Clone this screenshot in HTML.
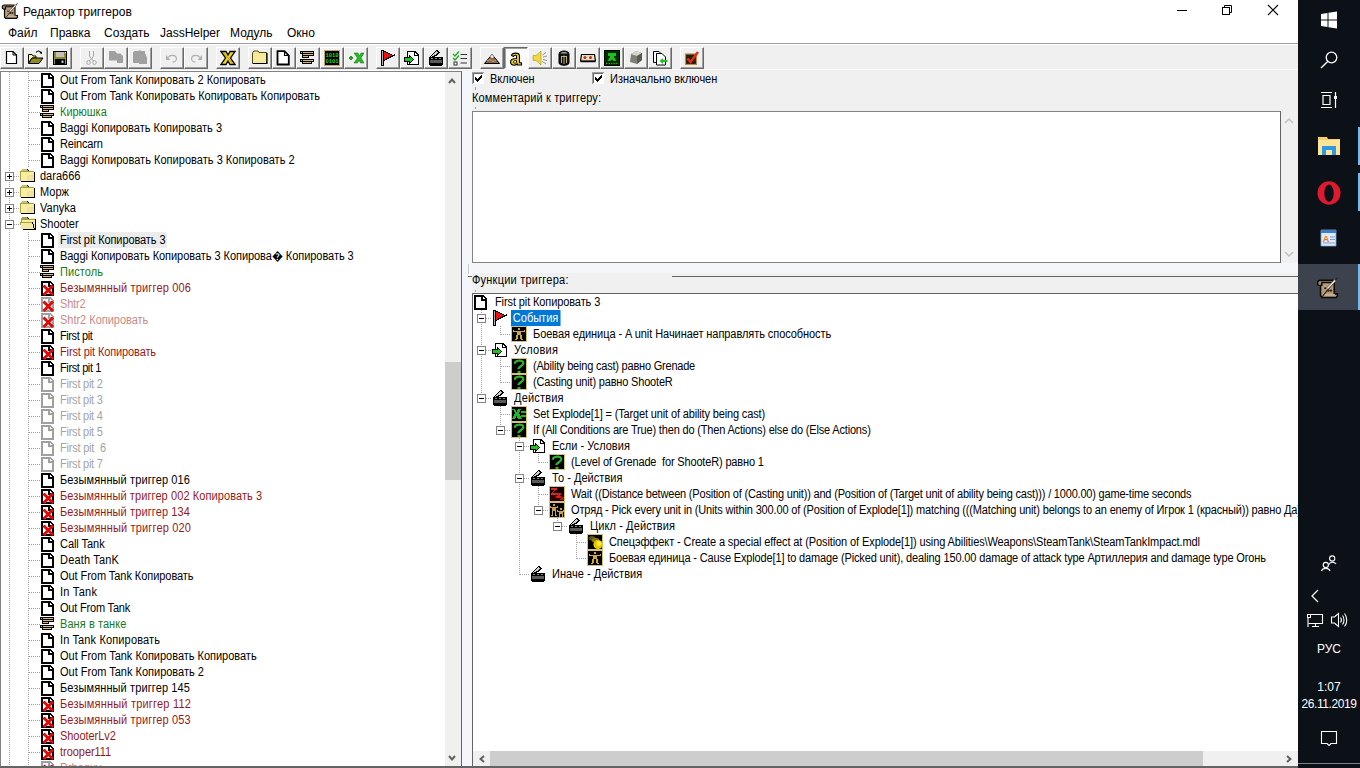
<!DOCTYPE html><html><head><meta charset="utf-8"><style>

*{margin:0;padding:0;box-sizing:border-box}
html,body{width:1360px;height:768px;overflow:hidden;background:#f0f0f0;font-family:"Liberation Sans",sans-serif;font-size:11px;color:#000}
.a{position:absolute}
.t{position:absolute;white-space:pre;line-height:16px;font-size:12px;height:16px;transform:scaleX(0.917);transform-origin:0 0}
.ic{position:absolute;width:16px;height:16px}
.ex{position:absolute;width:9px;height:9px}
.btn{position:absolute;top:47px;width:24px;height:22px;border-left:1px solid #fff;border-top:1px solid #fff;border-right:1px solid #696969;border-bottom:1px solid #696969;background:#f0f0f0;box-shadow:inset -1px -1px #a0a0a0}
.btn svg{position:absolute;left:3px;top:2px;width:16px;height:16px}
.dv{position:absolute;width:1px;background:repeating-linear-gradient(to bottom,#a0a0a0 0 1px,transparent 1px 2px)}
.dh{position:absolute;height:1px;background:repeating-linear-gradient(to right,#a0a0a0 0 1px,transparent 1px 2px)}
.tb{position:absolute;color:#fff}

</style></head><body>
<div class="a" style="left:0;top:0;width:1298px;height:43px;background:#fff"></div>
<svg class="a" style="left:0;top:0" width="22" height="22" viewBox="0 0 22 22"><path d="M4.5 5.5H15V15.5H17.5V17.2L16.5 18.3H5.5L4.5 17Z" fill="#b39a7a" stroke="#0a0806" stroke-width="1.2"/><path d="M2.2 7C2.2 5.3 3.2 5 4.5 5H14V6.8H5.5V9H3.2C2.5 9 2.2 8 2.2 7Z" fill="#9c8466" stroke="#0a0806" stroke-width="1.1"/><path d="M6 15.5H15.5V17H6Z" fill="#c8b090"/><circle cx="8" cy="11.2" r="0.8" fill="#2a2018"/><circle cx="10.5" cy="13" r="0.9" fill="#2a2018"/><circle cx="12.5" cy="13" r="0.9" fill="#2a2018"/><path d="M5.5 18L17.5 3.2" stroke="#2a2418" stroke-width="0.9"/><path d="M9 11.2L15.2 4.5L16.3 5.6L10.2 12Z" fill="#ece8dc" stroke="#4a4438" stroke-width="0.5"/></svg>
<div class="a" style="left:23px;top:1px;height:22px;line-height:22px;font-size:12px;white-space:pre">Редактор триггеров</div>
<div class="a" style="left:1177px;top:10px;width:10px;height:1px;background:#000"></div>
<svg class="a" style="left:1221px;top:4px" width="12" height="12" viewBox="0 0 12 12"><rect x="1.5" y="3.5" width="7" height="7" fill="none" stroke="#000"/><path d="M3.5 3.5V1.5H10.5V8.5H8.5" fill="none" stroke="#000"/></svg>
<svg class="a" style="left:1267px;top:4px" width="12" height="12" viewBox="0 0 12 12"><path d="M1 1L11 11M11 1L1 11" stroke="#000" stroke-width="1.1"/></svg>
<div class="a" style="left:8px;top:23px;height:20px;line-height:20px;font-size:12px;white-space:pre">Файл</div>
<div class="a" style="left:50px;top:23px;height:20px;line-height:20px;font-size:12px;white-space:pre">Правка</div>
<div class="a" style="left:104px;top:23px;height:20px;line-height:20px;font-size:12px;white-space:pre">Создать</div>
<div class="a" style="left:160px;top:23px;height:20px;line-height:20px;font-size:12px;white-space:pre">JassHelper</div>
<div class="a" style="left:230px;top:23px;height:20px;line-height:20px;font-size:12px;white-space:pre">Модуль</div>
<div class="a" style="left:287px;top:23px;height:20px;line-height:20px;font-size:12px;white-space:pre">Окно</div>
<div class="a" style="left:0;top:43px;width:1298px;height:1px;background:#a0a0a0"></div>
<div class="a" style="left:0;top:44px;width:1298px;height:1px;background:#fff"></div>
<div class="btn" style="left:0px;"><svg><use href="#tnew"/></svg></div>
<div class="btn" style="left:24px;"><svg><use href="#topen"/></svg></div>
<div class="btn" style="left:48px;"><svg><use href="#tsave"/></svg></div>
<div class="btn" style="left:80px;"><svg><use href="#tcut"/></svg></div>
<div class="btn" style="left:104px;"><svg><use href="#tcopy"/></svg></div>
<div class="btn" style="left:128px;"><svg><use href="#tpaste"/></svg></div>
<div class="btn" style="left:160px;"><svg><use href="#tundo"/></svg></div>
<div class="btn" style="left:184px;"><svg><use href="#tredo"/></svg></div>
<div class="btn" style="left:216px;"><svg><use href="#tx"/></svg></div>
<div class="btn" style="left:248px;"><svg><use href="#tfold"/></svg></div>
<div class="btn" style="left:272px;"><svg><use href="#tdoc"/></svg></div>
<div class="btn" style="left:296px;"><svg><use href="#var"/></svg></div>
<div class="btn" style="left:320px;"><svg><use href="#t0101"/></svg></div>
<div class="btn" style="left:344px;"><svg><use href="#tgx"/></svg></div>
<div class="btn" style="left:376px;"><svg><use href="#flag"/></svg></div>
<div class="btn" style="left:400px;"><svg><use href="#cond"/></svg></div>
<div class="btn" style="left:424px;"><svg><use href="#clap"/></svg></div>
<div class="btn" style="left:448px;"><svg><use href="#tchk"/></svg></div>
<div class="btn" style="left:480px;"><svg><use href="#tterr"/></svg></div>
<div class="btn" style="left:504px;background:#fbfbfb;border-left-color:#696969;border-top-color:#696969;border-right-color:#fff;border-bottom-color:#fff;box-shadow:inset 1px 1px #a0a0a0;"><svg><use href="#ta"/></svg></div>
<div class="btn" style="left:528px;"><svg><use href="#tsnd"/></svg></div>
<div class="btn" style="left:552px;"><svg><use href="#tunit"/></svg></div>
<div class="btn" style="left:576px;"><svg><use href="#tdood"/></svg></div>
<div class="btn" style="left:600px;"><svg><use href="#tface"/></svg></div>
<div class="btn" style="left:624px;"><svg><use href="#tcube"/></svg></div>
<div class="btn" style="left:648px;"><svg><use href="#tcpy"/></svg></div>
<div class="btn" style="left:680px;"><svg><use href="#trchk"/></svg></div>
<div class="a" style="left:0;top:70px;width:462px;height:1px;background:#fff"></div>
<div class="a" style="left:462px;top:69px;width:836px;height:1px;background:#f8f8f8"></div>
<div class="a" style="left:0;top:71px;width:462px;height:697px;background:#fff;border-top:1px solid #828282;border-left:1px solid #828282;border-right:1px solid #646464"></div>
<div class="dv" style="left:9px;top:72px;height:695px"></div>
<div class="dv" style="left:28px;top:72px;height:96px"></div>
<div class="dv" style="left:28px;top:232px;height:535px"></div>
<div class="dh" style="left:29px;top:80px;width:11px"></div>
<svg class="ic" style="left:40px;top:72px;width:16px;height:16px"><use href="#doc"/></svg>
<div class="t" style="left:60.2px;top:72px;color:#000;letter-spacing:-0.0167px;">Out From Tank Копировать 2 Копировать</div>
<div class="dh" style="left:29px;top:96px;width:11px"></div>
<svg class="ic" style="left:40px;top:88px;width:16px;height:16px"><use href="#doc"/></svg>
<div class="t" style="left:60.2px;top:88px;color:#000;letter-spacing:0.0111px;">Out From Tank Копировать Копировать Копировать</div>
<div class="dh" style="left:29px;top:112px;width:11px"></div>
<svg class="ic" style="left:40px;top:104px;width:16px;height:16px"><use href="#var"/></svg>
<div class="t" style="left:60.2px;top:104px;color:#187a18;letter-spacing:-0.0333px;">Кирюшка</div>
<div class="dh" style="left:29px;top:128px;width:11px"></div>
<svg class="ic" style="left:40px;top:120px;width:16px;height:16px"><use href="#doc"/></svg>
<div class="t" style="left:60.2px;top:120px;color:#000;letter-spacing:0.0036px;">Baggi Копировать Копировать 3</div>
<div class="dh" style="left:29px;top:144px;width:11px"></div>
<svg class="ic" style="left:40px;top:136px;width:16px;height:16px"><use href="#doc"/></svg>
<div class="t" style="left:60.2px;top:136px;color:#000;letter-spacing:-0.2000px;">Reincarn</div>
<div class="dh" style="left:29px;top:160px;width:11px"></div>
<svg class="ic" style="left:40px;top:152px;width:16px;height:16px"><use href="#doc"/></svg>
<div class="t" style="left:60.2px;top:152px;color:#000;letter-spacing:0.0317px;">Baggi Копировать Копировать 3 Копировать 2</div>
<div class="dh" style="left:14px;top:176px;width:7px"></div>
<svg class="ex" style="left:5px;top:172px;width:9px;height:9px"><use href="#plus"/></svg>
<svg class="ic" style="left:20px;top:168px;width:16px;height:16px"><use href="#fold"/></svg>
<div class="t" style="left:40px;top:168px;color:#000">dara666</div>
<div class="dh" style="left:14px;top:192px;width:7px"></div>
<svg class="ex" style="left:5px;top:188px;width:9px;height:9px"><use href="#plus"/></svg>
<svg class="ic" style="left:20px;top:184px;width:16px;height:16px"><use href="#fold"/></svg>
<div class="t" style="left:40px;top:184px;color:#000">Морж</div>
<div class="dh" style="left:14px;top:208px;width:7px"></div>
<svg class="ex" style="left:5px;top:204px;width:9px;height:9px"><use href="#plus"/></svg>
<svg class="ic" style="left:20px;top:200px;width:16px;height:16px"><use href="#fold"/></svg>
<div class="t" style="left:40px;top:200px;color:#000">Vanyka</div>
<div class="dh" style="left:14px;top:224px;width:7px"></div>
<svg class="ex" style="left:5px;top:220px;width:9px;height:9px"><use href="#minus"/></svg>
<svg class="ic" style="left:20px;top:216px;width:16px;height:16px"><use href="#foldo"/></svg>
<div class="t" style="left:40px;top:216px;color:#000">Shooter</div>
<div class="dh" style="left:29px;top:240px;width:11px"></div>
<svg class="ic" style="left:40px;top:232px;width:16px;height:16px"><use href="#doc"/></svg>
<div class="a" style="left:58px;top:232px;width:109px;height:16px;background:#ececec"></div>
<div class="t" style="left:60.2px;top:232px;color:#000;letter-spacing:-0.1048px;">First pit Копировать 3</div>
<div class="dh" style="left:29px;top:256px;width:11px"></div>
<svg class="ic" style="left:40px;top:248px;width:16px;height:16px"><use href="#doc"/></svg>
<div class="t" style="left:60.2px;top:248px;color:#000;letter-spacing:-0.0529px;">Baggi Копировать Копировать 3 Копирова� Копировать 3</div>
<div class="dh" style="left:29px;top:272px;width:11px"></div>
<svg class="ic" style="left:40px;top:264px;width:16px;height:16px"><use href="#var"/></svg>
<div class="t" style="left:60.2px;top:264px;color:#187a18;letter-spacing:0.0667px;">Пистоль</div>
<div class="dh" style="left:29px;top:288px;width:11px"></div>
<svg class="ic" style="left:40px;top:280px;width:16px;height:16px"><use href="#docx"/></svg>
<div class="t" style="left:60.2px;top:280px;color:#941a1a;letter-spacing:0.1667px;">Безымянный триггер 006</div>
<div class="dh" style="left:29px;top:304px;width:11px"></div>
<svg class="ic" style="left:40px;top:296px;width:16px;height:16px"><use href="#docxf"/></svg>
<div class="t" style="left:60.2px;top:296px;color:#c88a8a;letter-spacing:-0.2000px;">Shtr2</div>
<div class="dh" style="left:29px;top:320px;width:11px"></div>
<svg class="ic" style="left:40px;top:312px;width:16px;height:16px"><use href="#docxf"/></svg>
<div class="t" style="left:60.2px;top:312px;color:#c88a8a;letter-spacing:-0.0200px;">Shtr2 Копировать</div>
<div class="dh" style="left:29px;top:336px;width:11px"></div>
<svg class="ic" style="left:40px;top:328px;width:16px;height:16px"><use href="#doc"/></svg>
<div class="t" style="left:60.2px;top:328px;color:#000;letter-spacing:-0.4500px;">First pit</div>
<div class="dh" style="left:29px;top:352px;width:11px"></div>
<svg class="ic" style="left:40px;top:344px;width:16px;height:16px"><use href="#docx"/></svg>
<div class="t" style="left:60.2px;top:344px;color:#941a1a;letter-spacing:-0.1316px;">First pit Копировать</div>
<div class="dh" style="left:29px;top:368px;width:11px"></div>
<svg class="ic" style="left:40px;top:360px;width:16px;height:16px"><use href="#doc"/></svg>
<div class="t" style="left:60.2px;top:360px;color:#000;letter-spacing:-0.4200px;">First pit 1</div>
<div class="dh" style="left:29px;top:384px;width:11px"></div>
<svg class="ic" style="left:40px;top:376px;width:16px;height:16px"><use href="#docg"/></svg>
<div class="t" style="left:60.2px;top:376px;color:#a4a4a4;letter-spacing:-0.2600px;">First pit 2</div>
<div class="dh" style="left:29px;top:400px;width:11px"></div>
<svg class="ic" style="left:40px;top:392px;width:16px;height:16px"><use href="#docg"/></svg>
<div class="t" style="left:60.2px;top:392px;color:#a4a4a4;letter-spacing:-0.2600px;">First pit 3</div>
<div class="dh" style="left:29px;top:416px;width:11px"></div>
<svg class="ic" style="left:40px;top:408px;width:16px;height:16px"><use href="#docg"/></svg>
<div class="t" style="left:60.2px;top:408px;color:#a4a4a4;letter-spacing:-0.2600px;">First pit 4</div>
<div class="dh" style="left:29px;top:432px;width:11px"></div>
<svg class="ic" style="left:40px;top:424px;width:16px;height:16px"><use href="#docg"/></svg>
<div class="t" style="left:60.2px;top:424px;color:#a4a4a4;letter-spacing:-0.2600px;">First pit 5</div>
<div class="dh" style="left:29px;top:448px;width:11px"></div>
<svg class="ic" style="left:40px;top:440px;width:16px;height:16px"><use href="#docg"/></svg>
<div class="t" style="left:60.2px;top:440px;color:#a4a4a4;letter-spacing:-0.2273px;">First pit  6</div>
<div class="dh" style="left:29px;top:464px;width:11px"></div>
<svg class="ic" style="left:40px;top:456px;width:16px;height:16px"><use href="#docg"/></svg>
<div class="t" style="left:60.2px;top:456px;color:#a4a4a4;letter-spacing:-0.2600px;">First pit 7</div>
<div class="dh" style="left:29px;top:480px;width:11px"></div>
<svg class="ic" style="left:40px;top:472px;width:16px;height:16px"><use href="#doc"/></svg>
<div class="t" style="left:60.2px;top:472px;color:#000;letter-spacing:0.1190px;">Безымянный триггер 016</div>
<div class="dh" style="left:29px;top:496px;width:11px"></div>
<svg class="ic" style="left:40px;top:488px;width:16px;height:16px"><use href="#docx"/></svg>
<div class="t" style="left:60.2px;top:488px;color:#941a1a;letter-spacing:0.1000px;">Безымянный триггер 002 Копировать 3</div>
<div class="dh" style="left:29px;top:512px;width:11px"></div>
<svg class="ic" style="left:40px;top:504px;width:16px;height:16px"><use href="#docx"/></svg>
<div class="t" style="left:60.2px;top:504px;color:#941a1a;letter-spacing:0.1190px;">Безымянный триггер 134</div>
<div class="dh" style="left:29px;top:528px;width:11px"></div>
<svg class="ic" style="left:40px;top:520px;width:16px;height:16px"><use href="#docx"/></svg>
<div class="t" style="left:60.2px;top:520px;color:#941a1a;letter-spacing:0.1667px;">Безымянный триггер 020</div>
<div class="dh" style="left:29px;top:544px;width:11px"></div>
<svg class="ic" style="left:40px;top:536px;width:16px;height:16px"><use href="#doc"/></svg>
<div class="t" style="left:60.2px;top:536px;color:#000;letter-spacing:-0.0562px;">Call Tank</div>
<div class="dh" style="left:29px;top:560px;width:11px"></div>
<svg class="ic" style="left:40px;top:552px;width:16px;height:16px"><use href="#doc"/></svg>
<div class="t" style="left:60.2px;top:552px;color:#000;letter-spacing:0.2000px;">Death TanK</div>
<div class="dh" style="left:29px;top:576px;width:11px"></div>
<svg class="ic" style="left:40px;top:568px;width:16px;height:16px"><use href="#doc"/></svg>
<div class="t" style="left:60.2px;top:568px;color:#000;letter-spacing:-0.0609px;">Out From Tank Копировать</div>
<div class="dh" style="left:29px;top:592px;width:11px"></div>
<svg class="ic" style="left:40px;top:584px;width:16px;height:16px"><use href="#doc"/></svg>
<div class="t" style="left:60.2px;top:584px;color:#000;letter-spacing:0.3000px;">In Tank</div>
<div class="dh" style="left:29px;top:608px;width:11px"></div>
<svg class="ic" style="left:40px;top:600px;width:16px;height:16px"><use href="#doc"/></svg>
<div class="t" style="left:60.2px;top:600px;color:#000;letter-spacing:-0.2083px;">Out From Tank</div>
<div class="dh" style="left:29px;top:624px;width:11px"></div>
<svg class="ic" style="left:40px;top:616px;width:16px;height:16px"><use href="#var"/></svg>
<div class="t" style="left:60.2px;top:616px;color:#187a18;letter-spacing:0.0727px;">Ваня в танке</div>
<div class="dh" style="left:29px;top:640px;width:11px"></div>
<svg class="ic" style="left:40px;top:632px;width:16px;height:16px"><use href="#doc"/></svg>
<div class="t" style="left:60.2px;top:632px;color:#000;letter-spacing:0.1500px;">In Tank Копировать</div>
<div class="dh" style="left:29px;top:656px;width:11px"></div>
<svg class="ic" style="left:40px;top:648px;width:16px;height:16px"><use href="#doc"/></svg>
<div class="t" style="left:60.2px;top:648px;color:#000;letter-spacing:-0.0176px;">Out From Tank Копировать Копировать</div>
<div class="dh" style="left:29px;top:672px;width:11px"></div>
<svg class="ic" style="left:40px;top:664px;width:16px;height:16px"><use href="#doc"/></svg>
<div class="t" style="left:60.2px;top:664px;color:#000;letter-spacing:-0.0080px;">Out From Tank Копировать 2</div>
<div class="dh" style="left:29px;top:688px;width:11px"></div>
<svg class="ic" style="left:40px;top:680px;width:16px;height:16px"><use href="#doc"/></svg>
<div class="t" style="left:60.2px;top:680px;color:#000;letter-spacing:0.1190px;">Безымянный триггер 145</div>
<div class="dh" style="left:29px;top:704px;width:11px"></div>
<svg class="ic" style="left:40px;top:696px;width:16px;height:16px"><use href="#docx"/></svg>
<div class="t" style="left:60.2px;top:696px;color:#941a1a;letter-spacing:0.2095px;">Безымянный триггер 112</div>
<div class="dh" style="left:29px;top:720px;width:11px"></div>
<svg class="ic" style="left:40px;top:712px;width:16px;height:16px"><use href="#docx"/></svg>
<div class="t" style="left:60.2px;top:712px;color:#941a1a;letter-spacing:0.1619px;">Безымянный триггер 053</div>
<div class="dh" style="left:29px;top:736px;width:11px"></div>
<svg class="ic" style="left:40px;top:728px;width:16px;height:16px"><use href="#docx"/></svg>
<div class="t" style="left:60.2px;top:728px;color:#941a1a;letter-spacing:-0.0556px;">ShooterLv2</div>
<div class="dh" style="left:29px;top:752px;width:11px"></div>
<svg class="ic" style="left:40px;top:744px;width:16px;height:16px"><use href="#docx"/></svg>
<div class="t" style="left:60.2px;top:744px;color:#941a1a;letter-spacing:-0.0444px;">trooper111</div>
<div class="dh" style="left:29px;top:768px;width:11px"></div>
<svg class="ic" style="left:40px;top:760px;width:16px;height:16px"><use href="#docxf"/></svg>
<div class="t" style="left:60.2px;top:760px;color:#c88a8a;">Drbaguy</div>
<div class="a" style="left:445px;top:72px;width:16px;height:695px;background:#f0f0f0"></div>
<div class="a" style="left:445px;top:362px;width:16px;height:118px;background:#cdcdcd"></div>
<svg class="a" style="left:448px;top:77px" width="8" height="8" viewBox="0 0 8 8"><path d="M1 6L4 2.6L7 6" fill="none" stroke="#606060" stroke-width="2"/></svg>
<svg class="a" style="left:448px;top:754px" width="8" height="8" viewBox="0 0 8 8"><path d="M1 2L4 5.4L7 2" fill="none" stroke="#606060" stroke-width="2"/></svg>
<div class="a" style="left:462px;top:71px;width:10px;height:697px;background:#f3f6fb"></div>
<svg class="a" style="left:472px;top:72px" width="12" height="12" viewBox="0 0 12 12" shape-rendering="crispEdges"><rect width="12" height="12" fill="#fff"/><rect width="12" height="1" fill="#a0a0a0"/><rect width="1" height="12" fill="#a0a0a0"/><rect x="1" y="1" width="10" height="1" fill="#696969"/><rect x="1" y="1" width="1" height="10" fill="#696969"/><rect x="1" y="11" width="11" height="1" fill="#fff"/><rect x="11" y="1" width="1" height="11" fill="#fff"/><g fill="#000"><rect x="9" y="3" width="1" height="1"/><rect x="8" y="4" width="1" height="1"/><rect x="9" y="4" width="1" height="1"/><rect x="3" y="5" width="1" height="1"/><rect x="7" y="5" width="1" height="1"/><rect x="8" y="5" width="1" height="1"/><rect x="9" y="5" width="1" height="1"/><rect x="3" y="6" width="1" height="1"/><rect x="4" y="6" width="1" height="1"/><rect x="6" y="6" width="1" height="1"/><rect x="7" y="6" width="1" height="1"/><rect x="8" y="6" width="1" height="1"/><rect x="3" y="7" width="1" height="1"/><rect x="4" y="7" width="1" height="1"/><rect x="5" y="7" width="1" height="1"/><rect x="6" y="7" width="1" height="1"/><rect x="7" y="7" width="1" height="1"/><rect x="4" y="8" width="1" height="1"/><rect x="5" y="8" width="1" height="1"/><rect x="6" y="8" width="1" height="1"/><rect x="5" y="9" width="1" height="1"/></g></svg>
<div class="t" style="left:490px;top:71px">Включен</div>
<svg class="a" style="left:592px;top:72px" width="12" height="12" viewBox="0 0 12 12" shape-rendering="crispEdges"><rect width="12" height="12" fill="#fff"/><rect width="12" height="1" fill="#a0a0a0"/><rect width="1" height="12" fill="#a0a0a0"/><rect x="1" y="1" width="10" height="1" fill="#696969"/><rect x="1" y="1" width="1" height="10" fill="#696969"/><rect x="1" y="11" width="11" height="1" fill="#fff"/><rect x="11" y="1" width="1" height="11" fill="#fff"/><g fill="#000"><rect x="9" y="3" width="1" height="1"/><rect x="8" y="4" width="1" height="1"/><rect x="9" y="4" width="1" height="1"/><rect x="3" y="5" width="1" height="1"/><rect x="7" y="5" width="1" height="1"/><rect x="8" y="5" width="1" height="1"/><rect x="9" y="5" width="1" height="1"/><rect x="3" y="6" width="1" height="1"/><rect x="4" y="6" width="1" height="1"/><rect x="6" y="6" width="1" height="1"/><rect x="7" y="6" width="1" height="1"/><rect x="8" y="6" width="1" height="1"/><rect x="3" y="7" width="1" height="1"/><rect x="4" y="7" width="1" height="1"/><rect x="5" y="7" width="1" height="1"/><rect x="6" y="7" width="1" height="1"/><rect x="7" y="7" width="1" height="1"/><rect x="4" y="8" width="1" height="1"/><rect x="5" y="8" width="1" height="1"/><rect x="6" y="8" width="1" height="1"/><rect x="5" y="9" width="1" height="1"/></g></svg>
<div class="t" style="left:610px;top:71px">Изначально включен</div>
<div class="a" style="left:475px;top:87px;width:1px;height:3px;background:#a0a0a0"></div>
<div class="t" style="left:472px;top:90px;letter-spacing:0.15px">Комментарий к триггеру:</div>
<div class="a" style="left:475px;top:107px;width:1px;height:2px;background:#a0a0a0"></div>
<div class="a" style="left:472px;top:111px;width:809px;height:152px;background:#fff;border:1px solid #828282;border-right-color:#646464"></div>
<svg class="a" style="left:1284px;top:117px" width="10" height="7" viewBox="0 0 10 7"><path d="M1 6L5 2L9 6" fill="none" stroke="#c0c0c0" stroke-width="1.5"/></svg>
<svg class="a" style="left:1284px;top:251px" width="10" height="7" viewBox="0 0 10 7"><path d="M1 1L5 5L9 1" fill="none" stroke="#c0c0c0" stroke-width="1.5"/></svg>
<div class="a" style="left:472px;top:263px;width:826px;height:10px;background:#f4f6fa"></div>
<div class="a" style="left:468px;top:264px;width:1px;height:10px;background:#c8c8c8"></div>
<div class="a" style="left:672px;top:276px;width:626px;height:1px;background:#646464"></div>
<div class="a" style="left:468px;top:276px;width:4px;height:1px;background:#646464"></div>
<div class="t" style="left:472px;top:272px;letter-spacing:0.24px">Функции триггера:</div>
<div class="a" style="left:475px;top:290px;width:1px;height:2px;background:#a0a0a0"></div>
<div class="a" style="left:472px;top:293px;width:826px;height:475px;background:#fff;border-top:1px solid #646464;border-left:1px solid #646464;border-bottom:1px solid #646464"></div>
<div class="a" style="left:473px;top:294px;width:825px;height:457px;overflow:hidden">
<div class="dv" style="left:8px;top:16px;height:89px"></div>
<div class="dv" style="left:27px;top:32px;height:9px"></div>
<div class="dv" style="left:27px;top:64px;height:25px"></div>
<div class="dv" style="left:27px;top:112px;height:25px"></div>
<div class="dv" style="left:46px;top:144px;height:137px"></div>
<div class="dv" style="left:65px;top:160px;height:9px"></div>
<div class="dv" style="left:65px;top:192px;height:25px"></div>
<div class="dv" style="left:84px;top:224px;height:9px"></div>
<div class="dv" style="left:103px;top:240px;height:25px"></div>
<svg class="ic" style="left:0px;top:0px;width:16px;height:16px"><use href="#doc"/></svg>
<div class="t" style="left:21.5px;top:0px;letter-spacing:-0.1190px;">First pit Копировать 3</div>
<div class="dh" style="left:9px;top:24px;width:10px"></div>
<svg class="ex" style="left:4px;top:20px;width:9px;height:9px"><use href="#minus"/></svg>
<svg class="ic" style="left:19px;top:16px;width:16px;height:16px"><use href="#flag"/></svg>
<div class="t" style="left:38px;top:16px;background:#0078d7;color:#fff;padding:0 2px 0 2px">События</div>
<div class="dh" style="left:28px;top:40px;width:10px"></div>
<svg class="ic" style="left:38px;top:32px;width:16px;height:16px"><use href="#unit"/></svg>
<div class="t" style="left:59.5px;top:32px;letter-spacing:-0.0722px;">Боевая единица - A unit Начинает направлять способность</div>
<div class="dh" style="left:9px;top:56px;width:10px"></div>
<svg class="ex" style="left:4px;top:52px;width:9px;height:9px"><use href="#minus"/></svg>
<svg class="ic" style="left:19px;top:48px;width:16px;height:16px"><use href="#cond"/></svg>
<div class="t" style="left:40.5px;top:48px;letter-spacing:0.2917px;">Условия</div>
<div class="dh" style="left:28px;top:72px;width:10px"></div>
<svg class="ic" style="left:38px;top:64px;width:16px;height:16px"><use href="#ques"/></svg>
<div class="t" style="left:59.5px;top:64px;letter-spacing:-0.2273px;">(Ability being cast) равно Grenade</div>
<div class="dh" style="left:28px;top:88px;width:10px"></div>
<svg class="ic" style="left:38px;top:80px;width:16px;height:16px"><use href="#ques"/></svg>
<div class="t" style="left:59.5px;top:80px;letter-spacing:-0.1963px;">(Casting unit) равно ShooteR</div>
<div class="dh" style="left:9px;top:104px;width:10px"></div>
<svg class="ex" style="left:4px;top:100px;width:9px;height:9px"><use href="#minus"/></svg>
<svg class="ic" style="left:19px;top:96px;width:16px;height:16px"><use href="#clap"/></svg>
<div class="t" style="left:40.5px;top:96px;letter-spacing:0.2000px;">Действия</div>
<div class="dh" style="left:28px;top:120px;width:10px"></div>
<svg class="ic" style="left:38px;top:112px;width:16px;height:16px"><use href="#setv"/></svg>
<div class="t" style="left:59.5px;top:112px;letter-spacing:-0.1569px;">Set Explode[1] = (Target unit of ability being cast)</div>
<div class="dh" style="left:28px;top:136px;width:10px"></div>
<svg class="ex" style="left:23px;top:132px;width:9px;height:9px"><use href="#minus"/></svg>
<svg class="ic" style="left:38px;top:128px;width:16px;height:16px"><use href="#ques"/></svg>
<div class="t" style="left:59.5px;top:128px;letter-spacing:-0.1890px;">If (All Conditions are True) then do (Then Actions) else do (Else Actions)</div>
<div class="dh" style="left:47px;top:152px;width:10px"></div>
<svg class="ex" style="left:42px;top:148px;width:9px;height:9px"><use href="#minus"/></svg>
<svg class="ic" style="left:57px;top:144px;width:16px;height:16px"><use href="#cond"/></svg>
<div class="t" style="left:78.5px;top:144px;letter-spacing:0.0385px;">Если - Условия</div>
<div class="dh" style="left:66px;top:168px;width:10px"></div>
<svg class="ic" style="left:76px;top:160px;width:16px;height:16px"><use href="#ques"/></svg>
<div class="t" style="left:97.5px;top:160px;letter-spacing:-0.1789px;">(Level of Grenade  for ShooteR) равно 1</div>
<div class="dh" style="left:47px;top:184px;width:10px"></div>
<svg class="ex" style="left:42px;top:180px;width:9px;height:9px"><use href="#minus"/></svg>
<svg class="ic" style="left:57px;top:176px;width:16px;height:16px"><use href="#clap"/></svg>
<div class="t" style="left:78.5px;top:176px;letter-spacing:0.0417px;">То - Действия</div>
<div class="dh" style="left:66px;top:200px;width:10px"></div>
<svg class="ic" style="left:76px;top:192px;width:16px;height:16px"><use href="#wait"/></svg>
<div class="t" style="left:97.5px;top:192px;letter-spacing:-0.2111px;">Wait ((Distance between (Position of (Casting unit)) and (Position of (Target unit of ability being cast))) / 1000.00) game-time seconds</div>
<div class="dh" style="left:66px;top:216px;width:10px"></div>
<svg class="ex" style="left:61px;top:212px;width:9px;height:9px"><use href="#minus"/></svg>
<svg class="ic" style="left:76px;top:208px;width:16px;height:16px"><use href="#grp"/></svg>
<div class="t" style="left:97.5px;top:208px;letter-spacing:-0.1687px;">Отряд - Pick every unit in (Units within 300.00 of (Position of Explode[1]) matching (((Matching unit) belongs to an enemy of Игрок 1 (красный)) равно Да)) and do (Actions)</div>
<div class="dh" style="left:85px;top:232px;width:10px"></div>
<svg class="ex" style="left:80px;top:228px;width:9px;height:9px"><use href="#minus"/></svg>
<svg class="ic" style="left:95px;top:224px;width:16px;height:16px"><use href="#clap"/></svg>
<div class="t" style="left:116.5px;top:224px;letter-spacing:0.1071px;">Цикл - Действия</div>
<div class="dh" style="left:104px;top:248px;width:10px"></div>
<svg class="ic" style="left:114px;top:240px;width:16px;height:16px"><use href="#eff"/></svg>
<div class="t" style="left:135.5px;top:240px;letter-spacing:-0.1154px;">Спецэффект - Create a special effect at (Position of Explode[1]) using Abilities\Weapons\SteamTank\SteamTankImpact.mdl</div>
<div class="dh" style="left:104px;top:264px;width:10px"></div>
<svg class="ic" style="left:114px;top:256px;width:16px;height:16px"><use href="#unit"/></svg>
<div class="t" style="left:135.5px;top:256px;letter-spacing:-0.1551px;">Боевая единица - Cause Explode[1] to damage (Picked unit), dealing 150.00 damage of attack type Артиллерия and damage type Огонь</div>
<div class="dh" style="left:47px;top:280px;width:10px"></div>
<svg class="ic" style="left:57px;top:272px;width:16px;height:16px"><use href="#clap"/></svg>
<div class="t" style="left:78.5px;top:272px;letter-spacing:0.0333px;">Иначе - Действия</div>
</div>
<div class="a" style="left:473px;top:751px;width:825px;height:15px;background:#f0f0f0"></div>
<div class="a" style="left:490px;top:751px;width:713px;height:15px;background:#cdcdcd"></div>
<svg class="a" style="left:478px;top:755px" width="8" height="8" viewBox="0 0 8 8"><path d="M6 1L2.6 4L6 7" fill="none" stroke="#606060" stroke-width="2"/></svg>
<svg class="a" style="left:1285px;top:755px" width="8" height="8" viewBox="0 0 8 8"><path d="M2 1L5.4 4L2 7" fill="none" stroke="#606060" stroke-width="2"/></svg>
<div class="a" style="left:0;top:766px;width:1298px;height:2px;background:#646464"></div>
<div class="a" style="left:1298px;top:0;width:62px;height:768px;background:#0c1118"></div>
<div class="a" style="left:1298px;top:763px;width:62px;height:1px;background:#7d838b"></div>
<div class="a" style="left:1298px;top:264px;width:62px;height:46px;background:#3c434e"></div>
<div class="a" style="left:1358px;top:127px;width:2px;height:38px;background:#76b9ed"></div>
<div class="a" style="left:1358px;top:173px;width:2px;height:38px;background:#76b9ed"></div>
<div class="a" style="left:1358px;top:264px;width:2px;height:46px;background:#76b9ed"></div>
<svg class="a" style="left:1320px;top:11px" width="18" height="18" viewBox="0 0 18 18"><path d="M1 3L7.5 2V8.5H1ZM8.5 1.8L17 0.6V8.5H8.5ZM1 9.5H7.5V16L1 15ZM8.5 9.5H17V17.4L8.5 16.2Z" fill="#fff"/></svg>
<svg class="a" style="left:1320px;top:50px" width="18" height="20" viewBox="0 0 18 20"><circle cx="11.5" cy="7.5" r="5.3" fill="none" stroke="#fff" stroke-width="1.3"/><path d="M7.7 11.5L1 18" stroke="#fff" stroke-width="1.4"/></svg>
<svg class="a" style="left:1320px;top:91px" width="18" height="18" viewBox="0 0 18 18"><path d="M1 1.5H12M1 16.5H12M3 4.5H10V13.5H3Z M15.5 1V17" fill="none" stroke="#fff" stroke-width="1.2"/><rect x="14" y="5" width="3" height="3" fill="#fff"/></svg>
<svg class="a" style="left:1318px;top:136px" width="22" height="19" viewBox="0 0 22 19"><path d="M0 1H9L10 3H22V19H0Z" fill="#f5cf6a"/><path d="M0 4H22V19H0Z" fill="#ffe49a"/><path d="M4 10H18V19H14V14H8V19H4Z" fill="#2d9be0"/></svg>
<svg class="a" style="left:1317px;top:181px" width="24" height="24" viewBox="0 0 24 24"><ellipse cx="12" cy="12" rx="11.5" ry="11.8" fill="#e01a2e"/><ellipse cx="12" cy="12.2" rx="4.7" ry="8.6" fill="#0c1118"/></svg>
<svg class="a" style="left:1319px;top:228px" width="20" height="20" viewBox="0 0 20 20"><path d="M2 2H17V18H2Z" fill="#dfeaf6" stroke="#7aa0c8" stroke-width="0.8"/><rect x="2" y="2" width="15" height="3" fill="#3d7fc4"/><text x="7" y="14" font-family="Liberation Sans" font-size="9" font-weight="bold" fill="#e87a20" text-anchor="middle">A</text><path d="M11 9H16M11 11.5H16M4 15H16" stroke="#7aa0c8" stroke-width="1"/></svg>
<svg class="a" style="left:1316px;top:275px" width="26" height="26" viewBox="1 1 20 20"><path d="M4.5 5.5H15V15.5H17.5V17.2L16.5 18.3H5.5L4.5 17Z" fill="#b39a7a" stroke="#0a0806" stroke-width="1.2"/><path d="M2.2 7C2.2 5.3 3.2 5 4.5 5H14V6.8H5.5V9H3.2C2.5 9 2.2 8 2.2 7Z" fill="#9c8466" stroke="#0a0806" stroke-width="1.1"/><path d="M6 15.5H15.5V17H6Z" fill="#c8b090"/><circle cx="8" cy="11.2" r="0.8" fill="#2a2018"/><circle cx="10.5" cy="13" r="0.9" fill="#2a2018"/><circle cx="12.5" cy="13" r="0.9" fill="#2a2018"/><path d="M5.5 18L17.5 3.2" stroke="#2a2418" stroke-width="0.9"/><path d="M9 11.2L15.2 4.5L16.3 5.6L10.2 12Z" fill="#ece8dc" stroke="#4a4438" stroke-width="0.5"/></svg>
<svg class="a" style="left:1320px;top:554px" width="18" height="18" viewBox="0 0 18 18"><circle cx="12.2" cy="4.5" r="2.6" fill="none" stroke="#fff" stroke-width="1.1"/><path d="M9 10.5C9.8 7.5 14.5 7.5 16 10" fill="none" stroke="#fff" stroke-width="1.1"/><circle cx="5.8" cy="11" r="2.6" fill="none" stroke="#fff" stroke-width="1.1"/><path d="M1.5 17C2.5 13.5 9 13.5 10 17" fill="none" stroke="#fff" stroke-width="1.1"/></svg>
<svg class="a" style="left:1309px;top:589px" width="12" height="15" viewBox="0 0 12 15"><path d="M9 1L3 7L9 13" fill="none" stroke="#fff" stroke-width="1.2"/></svg>
<svg class="a" style="left:1306px;top:613px" width="18" height="15" viewBox="0 0 18 15"><path d="M4.5 1.5H16.5V10.5H2.5" fill="none" stroke="#fff" stroke-width="1.1"/><rect x="1.5" y="1.5" width="3" height="3" fill="none" stroke="#fff" stroke-width="1"/><path d="M2 4.5V14M9.5 10.5V13.5M6 13.5H13" fill="none" stroke="#fff" stroke-width="1.1"/></svg>
<svg class="a" style="left:1330px;top:612px" width="18" height="16" viewBox="0 0 18 16"><path d="M1.5 5H4.5L8.5 1.5V14.5L4.5 11H1.5Z" fill="none" stroke="#fff" stroke-width="1.1"/><path d="M10.5 5.5C11.5 6.8 11.5 9.2 10.5 10.5M12.5 3.5C14.5 5.8 14.5 10.2 12.5 12.5M14.5 1.5C17.5 4.8 17.5 11.2 14.5 14.5" fill="none" stroke="#fff" stroke-width="1.1"/></svg>
<div class="tb" style="left:1298px;top:641px;width:62px;text-align:center;font-size:12px;line-height:16px">РУС</div>
<div class="tb" style="left:1298px;top:679px;width:62px;text-align:center;font-size:12px;line-height:16px">1:07</div>
<div class="tb" style="left:1298px;top:696px;width:62px;text-align:center;font-size:12px;line-height:16px;letter-spacing:-0.4px">26.11.2019</div>
<svg class="a" style="left:1320px;top:730px" width="18" height="18" viewBox="0 0 18 18"><path d="M1.5 1.5H16.5V13.5H11L9 15.5L7 13.5H1.5Z" fill="none" stroke="#fff" stroke-width="1.1"/></svg>
<svg width="0" height="0" style="position:absolute"><defs>
<symbol id="doc" viewBox="0 0 16 16" shape-rendering="crispEdges"><path d="M1 1H10L14 5V16H1Z" fill="#000"/><path d="M3 3H8V7H12V14H3Z" fill="#fff"/><path d="M10 3H11V4H12V5H10Z" fill="#fff"/></symbol>
<symbol id="docg" viewBox="0 0 16 16" shape-rendering="crispEdges"><path d="M1 1H10L14 5V16H1Z" fill="#a0a0a0"/><path d="M3 3H8V7H12V14H3Z" fill="#fff"/><path d="M10 3H11V4H12V5H10Z" fill="#fff"/></symbol>
<symbol id="docx" viewBox="0 0 16 16"><path d="M1 1H10L14 5V16H1Z" fill="#000" shape-rendering="crispEdges"/><path d="M3 3H8V7H12V14H3Z" fill="#fff" shape-rendering="crispEdges"/><path d="M10 3H11V4H12V5H10Z" fill="#fff" shape-rendering="crispEdges"/><path d="M3.5 5.5L13 15M13 5.5L3.5 15" stroke="#dc0c0c" stroke-width="3"/></symbol>
<symbol id="docxf" viewBox="0 0 16 16"><path d="M1 1H10L14 5V16H1Z" fill="#a0a0a0" shape-rendering="crispEdges"/><path d="M3 3H8V7H12V14H3Z" fill="#fff" shape-rendering="crispEdges"/><path d="M10 3H11V4H12V5H10Z" fill="#fff" shape-rendering="crispEdges"/><path d="M3.5 5.5L13 15M13 5.5L3.5 15" stroke="#dc0c0c" stroke-width="3"/></symbol>
<symbol id="var" viewBox="0 0 16 16" shape-rendering="crispEdges"><path d="M0 1H14V6H9V8H2V4H0Z" fill="#000"/><rect x="3" y="2" width="10" height="1" fill="#d8bc68"/><rect x="3" y="4" width="10" height="1" fill="#d8bc68"/><rect x="3" y="6" width="5" height="1" fill="#d8bc68"/><rect x="1" y="2" width="1" height="1" fill="#c8b070"/><path d="M0 9H14V12H12V14H2V12H0Z" fill="#000"/><rect x="3" y="10" width="10" height="1" fill="#d8bc68"/><rect x="3" y="12" width="8" height="1" fill="#d8bc68"/><rect x="1" y="10" width="1" height="1" fill="#c8b070"/></symbol>
<symbol id="fold" viewBox="0 0 16 16" shape-rendering="crispEdges"><rect x="1" y="3" width="13" height="10" fill="#f8eea0"/><rect x="7" y="7" width="7" height="6" fill="#f2e0a0"/><path d="M0 3H14V4H1V13H0Z" fill="#a8a040"/><path d="M2 1H7V2H8V3H1V2H2Z" fill="#c8c070"/><path d="M7 1H8V2H9V3H8V2H7Z" fill="#000"/><rect x="14" y="4" width="1" height="10" fill="#000"/><rect x="1" y="13" width="14" height="1" fill="#000"/></symbol>
<symbol id="foldo" viewBox="0 0 16 16" shape-rendering="crispEdges"><rect x="2" y="2" width="13" height="11" fill="#f8eea0"/><path d="M2 1H7V2H8V3H15V4H2V13H1V2H2Z" fill="#a8a040"/><path d="M7 1H8V2H9V3H8V2H7Z" fill="#000"/><rect x="15" y="3" width="1" height="11" fill="#000"/><path d="M0 6H12V7H1V8H2V12H3V13H2V12H1V8H0Z" fill="#a8a040"/><rect x="1" y="7" width="11" height="6" fill="#f4e8a0"/><path d="M12 6H13V8H14V12H15V13H14V12H13V8H12Z" fill="#000"/><rect x="3" y="13" width="13" height="1" fill="#000"/></symbol>
<symbol id="plus" viewBox="0 0 9 9" shape-rendering="crispEdges"><rect x="0" y="0" width="9" height="9" fill="#848484"/><rect x="1" y="1" width="7" height="7" fill="#fff"/><path d="M2 4H7V5H2ZM4 2H5V7H4Z" fill="#000"/></symbol>
<symbol id="minus" viewBox="0 0 9 9" shape-rendering="crispEdges"><rect x="0" y="0" width="9" height="9" fill="#848484"/><rect x="1" y="1" width="7" height="7" fill="#fff"/><path d="M2 4H7V5H2Z" fill="#000"/></symbol>
<symbol id="flag" viewBox="0 0 16 16" shape-rendering="crispEdges"><rect x="1" y="0" width="3" height="16" fill="#000"/><rect x="2" y="1" width="1" height="14" fill="#b0b0b0"/><path d="M4 1H6V2H8V3H10V4H12V5H14V4H15V6H13V7H11V8H9V9H7V10H5V11H4Z" fill="#000"/><path d="M4 2H6V3H8V4H10V5H12V6H10V7H8V8H6V9H5V10H4Z" fill="#ee1010"/></symbol>
<symbol id="unit" viewBox="0 0 16 16" shape-rendering="crispEdges"><rect x="0" y="0" width="16" height="16" fill="#d8c078"/><rect x="1" y="1" width="14" height="14" fill="#000"/><rect x="7" y="2" width="2" height="2" fill="#d0a840"/><rect x="2" y="5" width="12" height="1" fill="#d0a840"/><rect x="2" y="4" width="1" height="1" fill="#d0a840"/><rect x="13" y="4" width="1" height="1" fill="#d0a840"/><rect x="6" y="5" width="4" height="4" fill="#d0a840"/><rect x="5" y="9" width="2" height="4" fill="#d0a840"/><rect x="9" y="9" width="2" height="4" fill="#d0a840"/><rect x="4" y="13" width="2" height="1" fill="#d0a840"/><rect x="10" y="13" width="2" height="1" fill="#d0a840"/></symbol>
<symbol id="cond" viewBox="0 0 16 16" shape-rendering="crispEdges"><path d="M3 1H11L15 5V15H3Z" fill="#000"/><path d="M4 2H10V6H14V14H4Z" fill="#fff"/><path d="M10 2H11V3H12V4H13V5H11V2Z" fill="#fff"/><path d="M0 7H5V5H6V6H7V7H8V8H9V9H10V10H9V11H8V12H7V13H6V14H5V12H0Z" fill="#000"/><path d="M1 8H6V7H7V8H8V9H9V10H8V11H7V12H6V11H1Z" fill="#18c818"/></symbol>
<symbol id="ques" viewBox="0 0 16 16"><rect x="0" y="0" width="16" height="16" fill="#d8c078" shape-rendering="crispEdges"/><rect x="1" y="1" width="14" height="14" fill="#000" shape-rendering="crispEdges"/><path d="M3.8 5.8C3.8 1.8 12.8 1.3 12.3 5.3C12 7.5 8.5 8.5 7 11" fill="none" stroke="#2cb42c" stroke-width="2.3"/><rect x="6.5" y="13" width="3" height="2" fill="#2cb42c"/></symbol>
<symbol id="clap" viewBox="0 0 16 16" shape-rendering="crispEdges"><path d="M1 7H15V15H14V16H2V15H1Z" fill="#000"/><rect x="2" y="10" width="12" height="3" fill="#5a5a5a"/><path d="M1 7L9 0H10V1H11V2H12V3L4 9H1Z" fill="#000"/><path d="M3 7H4V6H6V5H8V4H9V3H10V2H9V1H8V2H7V3H6V4H5V5H4V6H3Z" fill="#d0d0d0"/><rect x="3" y="8" width="2" height="1" fill="#888"/><rect x="7" y="8" width="2" height="1" fill="#888"/><rect x="11" y="8" width="2" height="1" fill="#888"/></symbol>
<symbol id="setv" viewBox="0 0 16 16" shape-rendering="crispEdges"><rect x="0" y="0" width="16" height="16" fill="#d8c078"/><rect x="1" y="1" width="14" height="14" fill="#000"/><path d="M1 3H4V4H5V6H6V4H7V3H10V4H9V6H8V8H9V10H10V12H11V13H7V12H6V10H5V12H4V13H1V12H2V10H3V8H4V6H3V4H1Z" fill="#20b820"/><rect x="10" y="5" width="5" height="2" fill="#20b820"/><rect x="10" y="9" width="5" height="2" fill="#20b820"/></symbol>
<symbol id="wait" viewBox="0 0 16 16" shape-rendering="crispEdges"><rect x="0" y="0" width="16" height="16" fill="#d8c078"/><rect x="1" y="1" width="14" height="14" fill="#0c0202"/><rect x="1" y="9" width="14" height="6" fill="#2a0606"/><path d="M2 2H8V4H6V5H5V6H4V7H8V9H2V7H3V6H4V5H5V4H2Z" fill="#e02424"/><path d="M7 7H12V8.5H11V9.5H10V10H12V11.5H7V10H8V9.5H9V8.5H7Z" fill="#d02020"/><path d="M11 11H15V12H14V13H15V14H11V13H12V12H11Z" fill="#c01818"/></symbol>
<symbol id="grp" viewBox="0 0 16 16" shape-rendering="crispEdges"><rect x="0" y="0" width="16" height="16" fill="#d8c078"/><rect x="1" y="1" width="14" height="14" fill="#000"/><g fill="#c8a040"><rect x="4" y="2" width="2" height="2"/><rect x="1" y="4" width="1" height="1"/><rect x="8" y="4" width="1" height="1"/><rect x="1" y="5" width="8" height="1"/><rect x="3" y="5" width="4" height="4"/><rect x="3" y="9" width="1" height="4"/><rect x="6" y="9" width="1" height="4"/><rect x="2" y="13" width="2" height="1"/><rect x="6" y="13" width="2" height="1"/><rect x="11" y="6" width="2" height="2"/><rect x="8" y="8" width="1" height="1"/><rect x="14" y="8" width="1" height="1"/><rect x="8" y="9" width="7" height="1"/><rect x="10" y="9" width="4" height="3"/><rect x="10" y="12" width="1" height="3"/><rect x="13" y="12" width="1" height="3"/></g></symbol>
<symbol id="eff" viewBox="0 0 16 16"><rect x="0" y="0" width="16" height="16" fill="#d8c078" shape-rendering="crispEdges"/><rect x="1" y="1" width="14" height="14" fill="#000" shape-rendering="crispEdges"/><ellipse cx="5" cy="4.2" rx="3.2" ry="2.3" fill="#5a5210"/><ellipse cx="8.5" cy="6.3" rx="3.8" ry="2.2" fill="#8a7a12"/><circle cx="11" cy="10.5" r="4.6" fill="#e8c800"/><circle cx="12" cy="9.5" r="2.3" fill="#fff030"/></symbol>

<symbol id="tnew" viewBox="0 0 16 16"><path d="M2.5 1.5H9L12.5 5V13.5H2.5Z" fill="#fff" stroke="#000" stroke-width="1.2"/><path d="M9 1.5V5H12.5" fill="none" stroke="#000" stroke-width="1"/></symbol>
<symbol id="topen" viewBox="0 0 16 16"><path d="M0.5 4.5H4L5 6H8V8H4L0.5 13Z" fill="#ffff90" stroke="#000" stroke-width="1"/><path d="M0.5 13.5L4 8H15L11 13.5Z" fill="#8c8c20" stroke="#000" stroke-width="1"/><path d="M8 2.5C9.5 0.5 12 0.5 13 3" fill="none" stroke="#000" stroke-width="1.1"/><path d="M11.5 3L14 4L14 1.5Z" fill="#000"/></symbol>
<symbol id="tsave" viewBox="0 0 16 16"><rect x="1" y="1" width="14" height="14" fill="#000"/><rect x="2" y="2" width="12" height="12" fill="#8c8c20"/><rect x="4" y="2" width="8" height="5" fill="#c0c0c0"/><rect x="3" y="9" width="10" height="5" fill="#000"/><rect x="9.5" y="10.5" width="2" height="2.5" fill="#c0c0c0"/><rect x="13" y="2" width="1" height="1" fill="#fff"/></symbol>
<symbol id="tcut" viewBox="0 0 16 16"><path d="M5.5 1V6L7.5 9M9.5 1V6L7.5 9M7.5 9L5 11M7.5 9L10 11" fill="none" stroke="#a8a8a8" stroke-width="1"/><ellipse cx="4.5" cy="12.5" rx="1.7" ry="2" fill="none" stroke="#a8a8a8"/><ellipse cx="10.5" cy="12.5" rx="1.7" ry="2" fill="none" stroke="#a8a8a8"/></symbol>
<symbol id="tcopy" viewBox="0 0 16 16"><path d="M1 1H7L9 3.5H12.5L15 6V13H9V10.5H1Z" fill="#a0a0a0"/></symbol>
<symbol id="tpaste" viewBox="0 0 16 16"><path d="M1 2.5L2.5 1H6L6.5 0.5H9L9.5 1H13V3L15 7.5V14H7V13H1Z" fill="#a0a0a0"/></symbol>
<symbol id="tundo" viewBox="0 0 16 16"><path d="M4 7.5C6 4.5 12 4.5 12.5 8.5C12.5 11 10 12 8.5 12" fill="none" stroke="#b0b0b0" stroke-width="1.2"/><path d="M2 5V10H6.5Z" fill="#b0b0b0"/></symbol>
<symbol id="tredo" viewBox="0 0 16 16"><path d="M12 7.5C10 4.5 4 4.5 3.5 8.5C3.5 11 6 12 7.5 12" fill="none" stroke="#b0b0b0" stroke-width="1.2"/><path d="M14 5V10H9.5Z" fill="#b0b0b0"/></symbol>
<symbol id="tx" viewBox="0 0 16 16"><path d="M1 1.5H6L8 5L10 1.5H15L10.5 8L15 14.5H10L8 11L6 14.5H1L5.5 8Z" fill="#f0d020" stroke="#000" stroke-width="1.3"/><path d="M3 2.5L13 13.5" stroke="#a08000" stroke-width="0.6"/></symbol>
<symbol id="tfold" viewBox="0 0 16 16"><path d="M0.5 3L2 1H6L7 2.5H14.5V13.5H0.5Z" fill="#f7ea9c" stroke="#3a3a00" stroke-width="0.9"/><path d="M1 13.5H15V3" fill="none" stroke="#000" stroke-width="1.2"/></symbol>
<symbol id="tdoc" viewBox="0 0 16 16"><path d="M1.5 1.2H8.5L12.8 5.5V14.5H1.5Z" fill="#fff" stroke="#000" stroke-width="1.8"/><path d="M8.5 1.2V5.5H12.8" fill="none" stroke="#000" stroke-width="1.1"/></symbol>
<symbol id="t0101" viewBox="0 0 16 16"><rect x="0.5" y="0.5" width="15" height="15" fill="#000" stroke="#c8a850"/><text x="8" y="7" font-family="Liberation Mono" font-size="5.5" font-weight="bold" fill="#20d020" text-anchor="middle">1010</text><text x="8" y="13" font-family="Liberation Mono" font-size="5.5" font-weight="bold" fill="#20d020" text-anchor="middle">0101</text></symbol>
<symbol id="tgx" viewBox="0 0 16 16"><path d="M6 3H10L11.5 6L13 3H16L13 8L16 13H12.5L11 10L9.5 13H6L9.5 8Z" fill="#20c020" stroke="#106010" stroke-width="0.5"/><path d="M1 8H5M3 6V10" stroke="#20a020" stroke-width="2"/></symbol>
<symbol id="tchk" viewBox="0 0 16 16"><path d="M1 4L3 6L7 1.5M1 8L3 10L7 5.5" fill="none" stroke="#20b020" stroke-width="1.4"/><rect x="2" y="12" width="3" height="3" fill="none" stroke="#333" stroke-width="1"/><path d="M8.5 4.5H15M8.5 8.5H15M8.5 13H15" stroke="#333" stroke-width="1.1"/></symbol>
<symbol id="tterr" viewBox="0 0 16 16"><path d="M0.5 13.5L8 4.5L15.5 13.5Z" fill="#8a6a48" stroke="#000" stroke-width="1"/><path d="M6 7L8 4.5L10 7L8.5 8Z" fill="#f0f0f0"/><path d="M3 11L6 9.5L9 11.5L12 10" stroke="#c8a070" stroke-width="1" fill="none"/></symbol>
<symbol id="ta" viewBox="0 0 16 16"><path d="M3.5 5.5C4 2.5 11.5 2 11.5 6V12.5L13.5 13V15H9.5L9.2 14C7 16 2.5 15.5 2.5 12C2.5 9 6 8.5 8.5 8.5V6.5C8.5 4.5 6 5 5.5 6.5Z" fill="#e8c820" stroke="#000" stroke-width="1.1"/><path d="M8.5 10.5C6.5 10.5 5.5 11 5.5 12C5.5 13.5 7.5 13.5 8.5 12.5Z" fill="#fff" stroke="#000" stroke-width="0.9"/></symbol>
<symbol id="tsnd" viewBox="0 0 16 16"><path d="M1 5.5H4L9 1V15L4 10.5H1Z" fill="#f0d840" stroke="#a89020" stroke-width="0.6"/><path d="M10.5 5L14 2.5M11 7L15 6M11 9.5L15 10.5M10.5 11.5L14 14" stroke="#909090" stroke-width="0.9"/></symbol>
<symbol id="tunit" viewBox="0 0 16 16"><path d="M3 4C3 0 13 0 13 4V13C13 16 3 16 3 13Z" fill="#111" stroke="#000"/><path d="M4.5 3.5C5 1.5 11 1.5 11.5 3.5Z" fill="#aaa"/><path d="M5.5 6V13M8 5.5V14M10.5 6V13M5.5 6.5H10.5" stroke="#d0c080" stroke-width="0.9" fill="none"/></symbol>
<symbol id="tdood" viewBox="0 0 16 16"><path d="M1.5 4.5H14.5L15.5 11H0.5Z" fill="#e8dcc0" stroke="#000" stroke-width="1.2"/><circle cx="5" cy="7.5" r="1.5" fill="#c03020"/><circle cx="10.5" cy="7.5" r="1.5" fill="#c03020"/><path d="M0.5 11.5H15.5" stroke="#000" stroke-width="1.5"/></symbol>
<symbol id="tface" viewBox="0 0 16 16"><rect x="0" y="0" width="16" height="16" fill="#000"/><rect x="1" y="1" width="14" height="14" fill="#003000"/><path d="M4 3H12V6H10V8H11L12 11H10L8 9.5L6 11H4L5 8H6V6H4Z" fill="#20c020"/><path d="M2 13.5H14" stroke="#20a020" stroke-width="1.2" stroke-dasharray="1.5 1"/></symbol>
<symbol id="tcube" viewBox="0 0 16 16"><path d="M3 4L8 1L14 3V10L9 14L2 12Z" fill="#808078"/><path d="M3 4L8 1L14 3L9 6Z" fill="#d8d4c8"/><path d="M9 6L14 3V10L9 14Z" fill="#5a5a54"/></symbol>
<symbol id="tcpy" viewBox="0 0 16 16"><path d="M1.5 1.5H7L9 3.5V12.5H1.5Z" fill="#fff" stroke="#000" stroke-width="1"/><path d="M4.5 3.5H10L13.5 7V15H4.5Z" fill="#fff" stroke="#000" stroke-width="1"/><path d="M15.5 10H11V8L7.5 11L11 14V12H15.5Z" fill="#20c020"/></symbol>
<symbol id="trchk" viewBox="0 0 16 16"><rect x="1.5" y="4" width="11" height="10.5" fill="#2a1a08" stroke="#b09050" stroke-width="1.2"/><path d="M3.5 8.5L6.5 12L14 2" fill="none" stroke="#e03010" stroke-width="2.5"/></symbol>
</defs></svg>
</body></html>
